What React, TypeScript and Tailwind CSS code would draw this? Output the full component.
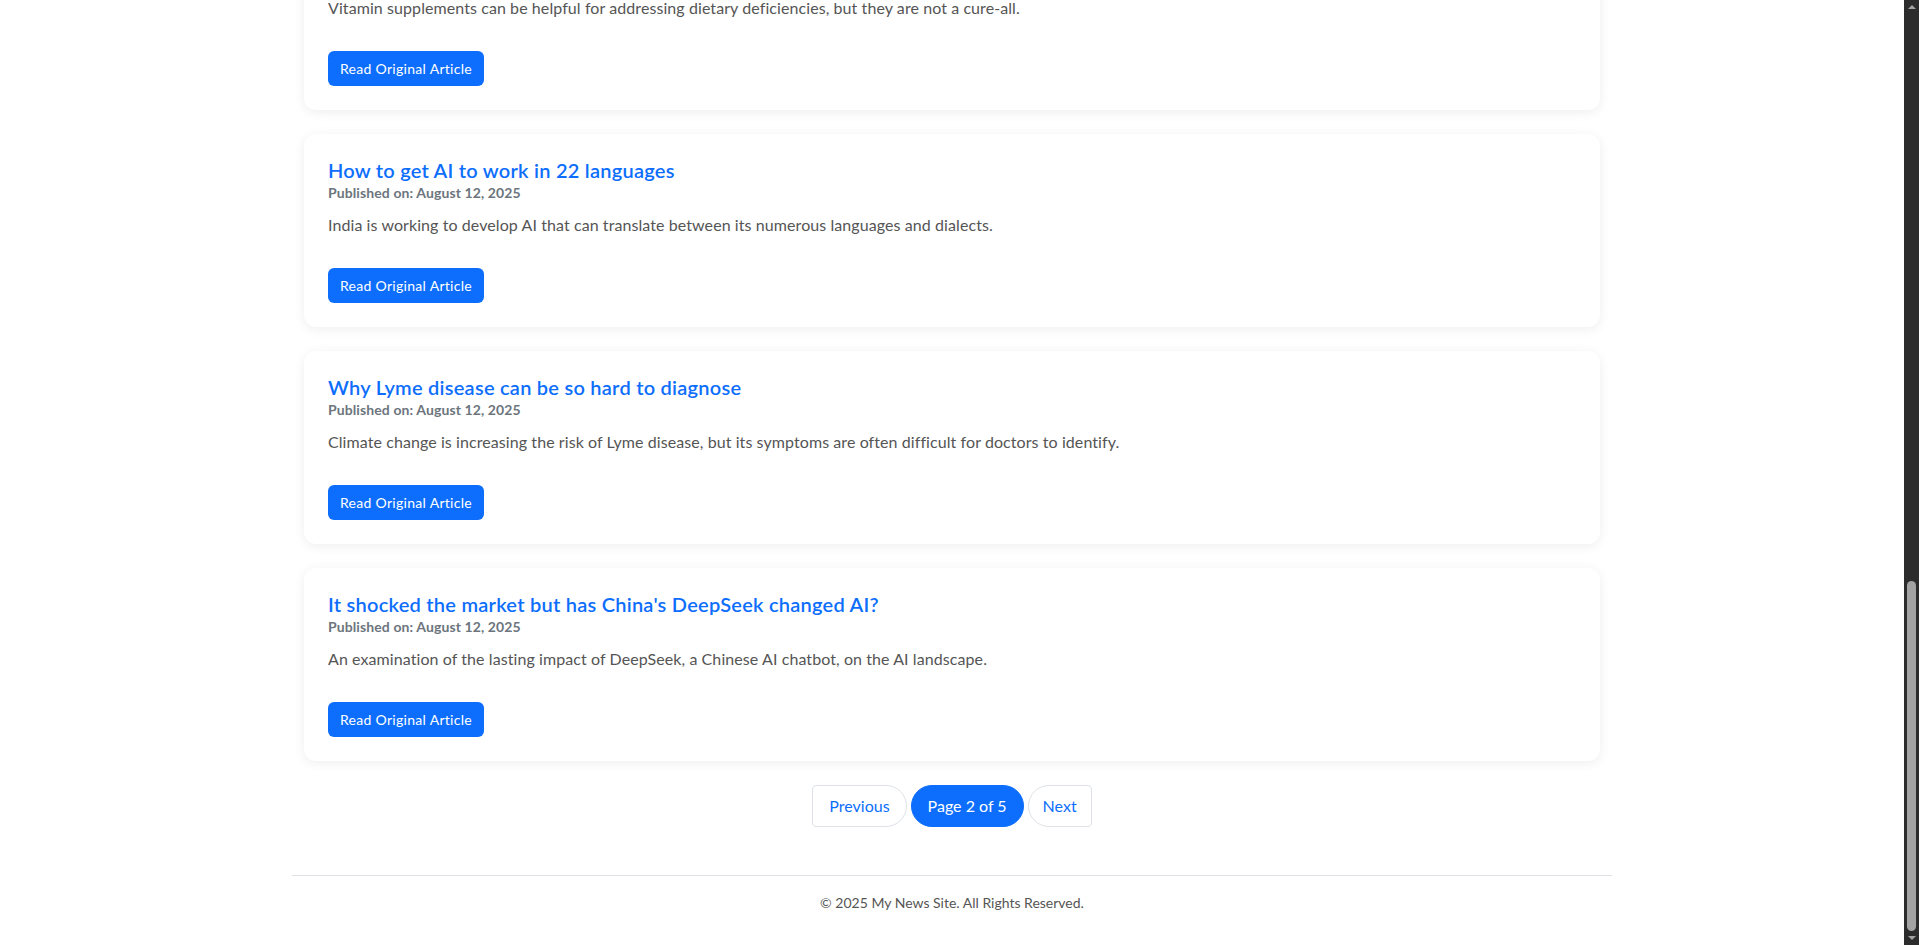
import React from "react";

type Article = {
  title: string;
  date: string;
  summary: string;
};

const articles: Article[] = [
  {
    title: "Do vitamin supplements really make us healthier?",
    date: "August 12, 2025",
    summary:
      "Vitamin supplements can be helpful for addressing dietary deficiencies, but they are not a cure-all.",
  },
  {
    title: "How to get AI to work in 22 languages",
    date: "August 12, 2025",
    summary:
      "India is working to develop AI that can translate between its numerous languages and dialects.",
  },
  {
    title: "Why Lyme disease can be so hard to diagnose",
    date: "August 12, 2025",
    summary:
      "Climate change is increasing the risk of Lyme disease, but its symptoms are often difficult for doctors to identify.",
  },
  {
    title: "It shocked the market but has China's DeepSeek changed AI?",
    date: "August 12, 2025",
    summary:
      "An examination of the lasting impact of DeepSeek, a Chinese AI chatbot, on the AI landscape.",
  },
];

function ArticleCard({ article }: { article: Article }) {
  return (
    <div className="bg-white rounded-xl p-6 shadow-[0_2px_12px_rgba(0,0,0,0.07)]">
      <h5 className="text-[20px] leading-[24px] font-semibold tracking-[0.25px] text-[#0d6efd]">{article.title}</h5>
      <p className="text-[14px] leading-[21px] font-bold tracking-[0.1px] text-[#6c757d]">Published on: {article.date}</p>
      <p className="mt-[10px] text-[16px] leading-[24px] tracking-[0.08px] text-[#555]">{article.summary}</p>
      <a
        href="#"
        className="mt-[31px] inline-block rounded-md bg-[#0d6efd] px-3 py-[7px] text-[14px] leading-[21px] tracking-[0.3px] text-white"
      >
        Read Original Article
      </a>
    </div>
  );
}

export default function App() {
  return (
    <div
      className="flex h-[945px] w-full overflow-hidden bg-white"
      style={{ fontFamily: "'Segoe UI', Lato, 'Noto Sans', sans-serif" }}
    >
      {/* page, scrolled to the bottom */}
      <div className="flex flex-1 flex-col justify-end overflow-hidden">
        <main className="mx-auto w-[1320px] px-3">
          <div className="flex flex-col gap-6">
            {articles.map((a) => (
              <ArticleCard key={a.title} article={a} />
            ))}
          </div>

          {/* pagination */}
          <div className="mt-6 flex justify-center gap-1">
            <button className="rounded-l-[4px] rounded-r-[21px] border border-[#dee2e6] bg-white px-4 py-2 text-[16px] leading-[24px] text-[#0d6efd]">
              Previous
            </button>
            <span className="rounded-[21px] border border-[#0d6efd] bg-[#0d6efd] px-4 py-2 text-[16px] leading-[24px] text-white">
              Page 2 of 5
            </span>
            <button className="rounded-l-[21px] rounded-r-[4px] border border-[#dee2e6] bg-white px-[14px] py-2 text-[16px] leading-[24px] text-[#0d6efd]">
              Next
            </button>
          </div>
        </main>

        <footer className="mx-auto mt-12 w-[1320px] border-t border-[#dee2e6] pt-4 pb-8 text-center text-[14px] leading-[21px] text-[#555]">
          © 2025 My News Site. All Rights Reserved.
        </footer>
      </div>

      {/* scrollbar */}
      <div className="flex w-[15px] flex-col items-center bg-[#2c2c2c]">
        <div className="flex h-[14px] items-center justify-center">
          <div className="h-0 w-0 border-x-[4px] border-b-[4px] border-x-transparent border-b-[#a3a3a3]" />
        </div>
        <div className="flex-1" />
        <div className="h-[350px] w-[9px] rounded-full bg-[#a3a3a3]" />
        <div className="flex h-[14px] items-center justify-center">
          <div className="h-0 w-0 border-x-[4px] border-t-[4px] border-x-transparent border-t-[#a3a3a3]" />
        </div>
      </div>
    </div>
  );
}
